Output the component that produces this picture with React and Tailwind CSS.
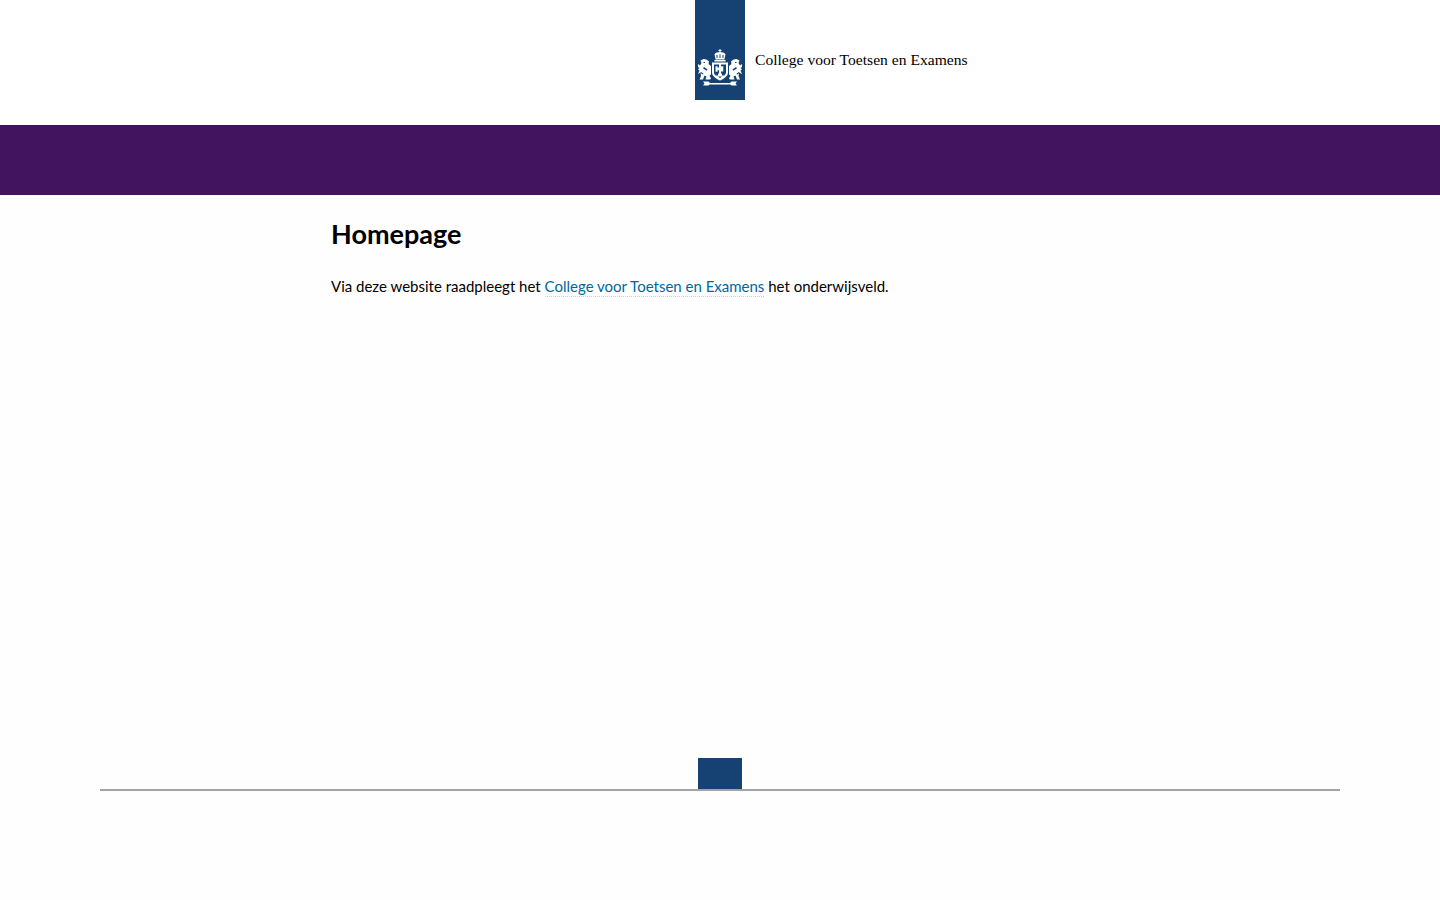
import React from 'react';

function Crest() {
  return (
    <svg viewBox="0 0 44 38" className="w-[44px] h-[38px]" fill="#fff">
      {/* crown */}
      <path d="M21.500 0h1v1h1v1h-1v1.500h-1V2h-1V1h1z" />
      <path d="M16.500 5c1-1.300 3.200-2 5.500-2s4.500.7 5.500 2l-1 5.500h-9z" />
      <path fill="#154273" d="M18.500 6h1v3h-1zM21.500 5.500h1V9h-1zM24.500 6h1v3h-1z" />
      <rect x="16.500" y="11" width="11" height="1.500" />
      {/* shield */}
      <path d="M14 13.500h16v10c0 3.500-3.500 6-8 8-4.500-2-8-4.500-8-8z" />
      <path fill="#154273" d="M16 15.500h5v3h-1.500v-1.200h-2v5.500h2v-1.500H21v3.200h-1v2h-2.200c-1-.8-1.800-1.800-1.800-3zM23 15.500h5v8c0 1.200-.8 2.200-1.800 3H24v-2h-1v-2h2.300v-5.200H23z" />
      <path fill="#154273" d="M20 27.500h4l-2 1.500z" />
      {/* left lion */}
      <path d="M0 15l2 1.500L3.500 14 2.500 11.500l3-1.500 3 .5 2.500 2-.5 2.500L13 17v8.500l-1.500 1 1.500 3-1 1H7.500l1-3-2-1-1.500 4H1.500l1.500-3.500-.5-3.500L0 25l1.500-3.500L0 20.500l1.500-1.500L0 18z" />
      <path fill="#154273" d="M5.500 13h1.500v1H5.500zM6 18l3.500 2.500-1 1.200L5 19.200zM3 23l2.500 1.500-.5 1L2.500 24z" />
      {/* right lion */}
      <path d="M44 15l-2 1.500L40.500 14l1-2.500-3-1.500-3 .5-2.500 2 .5 2.500L31 17v8.500l1.500 1-1.500 3 1 1h4.500l-1-3 2-1 1.500 4h3l-1.500-3.500.5-3.500L44 25l-1.500-3.500 1.500-1-1.500-1.500L44 18z" />
      <path fill="#154273" d="M38.500 13H37v1h1.500zM38 18l-3.500 2.500 1 1.200L39 19.200zM41 23l-2.500 1.500.5 1 2.500-1.500z" />
      {/* motto ribbon */}
      <path d="M5 32.500h5.500l1.500 1.500h20l1.500-1.500H39l-1.500 2 1.500 2h-5.500l-1-1H11.500l-1 1H5l1.500-2z" />
    </svg>
  );
}

export default function App() {
  return (
    <div className="min-h-[900px] bg-[#fefefe] font-['Lato','Noto_Sans',sans-serif] text-black">
      <header className="h-[125px] bg-white grid grid-cols-[1fr_50px_1fr]">
        <div></div>
        <div className="w-[50px] h-[100px] bg-[#154273] flex items-end justify-center pb-[13px]">
          <Crest />
        </div>
        <div className="pl-[10px] pt-[50px] font-['Liberation_Serif',serif] text-[15.6px] leading-[20px] whitespace-nowrap">
          College voor Toetsen en Examens
        </div>
      </header>

      <div className="h-[70px] bg-[#42145f]"></div>

      <main className="h-[563px] pl-[331px]">
        <h1 className="pt-[22px] text-[27px] leading-[34px] font-bold">Homepage</h1>
        <p className="mt-[23px] text-[15px] leading-[24px]">
          Via deze website raadpleegt het{' '}
          <a href="#" className="text-[#01689b] pb-[1px] border-b border-dotted border-[#cccccc]">
            College voor Toetsen en Examens
          </a>{' '}
          het onderwijsveld.
        </p>
      </main>

      <footer className="mx-[100px] border-b-2 border-[#a3a3a3] flex justify-center h-[33px]">
        <div className="w-[44px] h-[31px] bg-[#154273]"></div>
      </footer>
    </div>
  );
}
